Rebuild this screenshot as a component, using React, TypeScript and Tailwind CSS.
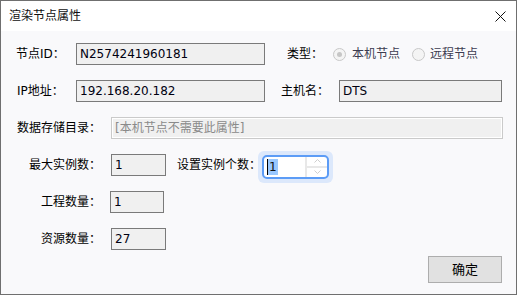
import React from "react";

const F = "font-['DejaVu_Sans','Noto_Sans_CJK_SC',sans-serif]";

function Field({ w, value, className = "" }: { w: string; value: string; className?: string }) {
  return (
    <div className={`${w} h-[22px] border border-[#7a7a7a] bg-[#f0f0f0] flex items-center pl-[3px] text-[12px] text-[#000010] ${className}`}>
      {value}
    </div>
  );
}

function Radio({ checked }: { checked?: boolean }) {
  return (
    <div className="w-[13px] h-[13px] rounded-full border border-[#c8c8c8] bg-[#f4f4f4] flex items-center justify-center shrink-0">
      {checked && <div className="w-[5px] h-[5px] rounded-full bg-[#c6c6c6]" />}
    </div>
  );
}

export default function App() {
  return (
    <div className={`w-[517px] h-[296px] bg-white ${F} text-[12px] text-black leading-none whitespace-nowrap`}>
      <div className="w-[517px] h-[295px] border border-[#6f6f6f] flex flex-col">
        {/* title bar */}
        <div className="h-[30px] bg-white flex items-center justify-between pl-[8px] pr-[10px] shrink-0">
          <span className="text-[12px] text-[#101010]">渲染节点属性</span>
          <svg width="11" height="11" viewBox="0 0 11 11" className="mt-[1px]">
            <path d="M0.5 0.5 L10.5 10.5 M10.5 0.5 L0.5 10.5" stroke="#111" strokeWidth="1" />
          </svg>
        </div>
        {/* body */}
        <div className="flex-1 bg-[#f9f9fb] flex flex-col pt-[12px] gap-[15px]">
          {/* row 1 */}
          <div className="h-[22px] flex items-center pl-[15px]">
            <div className="w-[60px]">节点ID：</div>
            <Field w="w-[189px]" value="N2574241960181" />
            <div className="ml-[22px] w-[46px]">类型：</div>
            <Radio checked />
            <span className="ml-[6px] text-[#3c3c50]">本机节点</span>
            <div className="ml-[12px]">
              <Radio />
            </div>
            <span className="ml-[5px] text-[#3c3c50]">远程节点</span>
          </div>
          {/* row 2 */}
          <div className="h-[22px] flex items-center pl-[15px]">
            <div className="w-[60px] pl-[1px]">IP地址：</div>
            <Field w="w-[189px]" value="192.168.20.182" />
            <div className="ml-[16px] w-[58px]">主机名：</div>
            <Field w="w-[163px]" value="DTS" />
          </div>
          {/* row 3 */}
          <div className="h-[22px] flex items-center pl-[15px]">
            <div className="w-[85px] text-right">数据存储目录：</div>
            <div className="ml-[10px] w-[392px] h-[22px] border border-[#cacaca] bg-[#f0f0f0] shadow-[inset_0_0_0_1px_#ffffff] flex items-center pl-[3px] text-[#8a8a8a]">
              [本机节点不需要此属性]
            </div>
          </div>
          {/* row 4 */}
          <div className="h-[22px] flex items-center pl-[15px]">
            <div className="w-[85px] text-right">最大实例数：</div>
            <Field w="w-[55px]" value="1" className="ml-[10px]" />
            <div className="ml-[11px] w-[81px] shrink-0">设置实例个数：</div>
            <div className="w-[75px] h-[32px] shrink-0 rounded-[6px] bg-[#dce8fb] flex items-center justify-center mt-[3px]">
              <div className="w-[67px] h-[24px] rounded-[5px] border-[2px] border-[#5c9cf6] bg-white flex items-stretch overflow-hidden">
                <div className="flex-1 flex items-center pl-[3px]">
                  <div className="w-[1px] h-[16px] bg-black" />
                  <span className="bg-[#99c8ff] h-[16px] flex items-center px-[1px] text-[#111]">1</span>
                </div>
                <div className="w-[22px] flex flex-col border-l-[2px] border-[#e8e8e8]">
                  <div className="flex-1 flex items-center justify-center border-b-[2px] border-[#e8e8e8]">
                    <svg width="7" height="4" viewBox="0 0 7 4">
                      <path d="M0.5 3.5 L3.5 0.5 L6.5 3.5" stroke="#cfcfcf" strokeWidth="1" fill="none" />
                    </svg>
                  </div>
                  <div className="flex-1 flex items-center justify-center">
                    <svg width="7" height="4" viewBox="0 0 7 4">
                      <path d="M0.5 0.5 L3.5 3.5 L6.5 0.5" stroke="#cfcfcf" strokeWidth="1" fill="none" />
                    </svg>
                  </div>
                </div>
              </div>
            </div>
          </div>
          {/* row 5 */}
          <div className="h-[22px] flex items-center pl-[15px]">
            <div className="w-[85px] text-right">工程数量：</div>
            <Field w="w-[54px]" value="1" className="ml-[9px]" />
          </div>
          {/* row 6 */}
          <div className="h-[22px] flex items-center pl-[15px]">
            <div className="w-[85px] text-right">资源数量：</div>
            <Field w="w-[55px]" value="27" className="ml-[10px]" />
          </div>
          {/* button */}
          <div className="flex justify-end pr-[14px] -mt-[9px]">
            <div className="w-[74px] h-[27px] bg-[#e1e1e1] border border-[#adadad] flex items-center justify-center text-[13px]">
              确定
            </div>
          </div>
        </div>
      </div>
    </div>
  );
}
